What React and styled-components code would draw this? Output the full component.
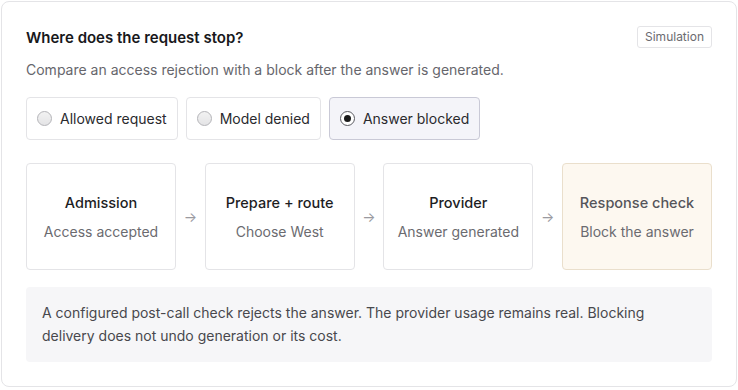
import * as React from 'react'
import styled, { createGlobalStyle } from 'styled-components'

const GlobalStyle = createGlobalStyle`
  html, body {
    margin: 0;
    padding: 0;
    background: #ffffff;
  }
  body {
    padding: 1px;
    font-family: Inter, "Liberation Sans", sans-serif;
    color: #1d1d1f;
    -webkit-font-smoothing: antialiased;
  }
  * {
    box-sizing: border-box;
  }
`

const Panel = styled.section`
  width: 736px;
  height: 386px;
  border: 1px solid #e4e4e7;
  border-radius: 8px;
  padding: 24px;
  background: #ffffff;
  display: flex;
  flex-direction: column;
`

const Header = styled.div`
  display: flex;
  justify-content: space-between;
  align-items: flex-start;
  height: 24px;
`

const Title = styled.h2`
  margin: 0;
  font-size: 15px;
  line-height: 24px;
  font-weight: 600;
  color: #18181b;
`

const Badge = styled.span`
  font-size: 12px;
  line-height: 20px;
  height: 22px;
  padding: 0 7px;
  color: #6b6b70;
  border: 1px solid #e4e4e7;
  border-radius: 3px;
`

const Lead = styled.p`
  margin: 10px 0 0 0;
  font-size: 14px;
  line-height: 20px;
  color: #66666c;
`

const Choices = styled.div`
  display: flex;
  gap: 8px;
  margin-top: 17px;
`

const Choice = styled.button`
  display: flex;
  align-items: center;
  gap: 8px;
  height: 43px;
  padding: 0 10px 0 10px;
  font-family: inherit;
  font-size: 14px;
  color: #2a2a2e;
  border-radius: 4px;
  border: 1px solid ${p => (p.$active ? '#c9c9d6' : '#e4e4e7')};
  background: ${p => (p.$active ? '#f4f4f9' : '#ffffff')};
  cursor: pointer;
`

const Dot = styled.span`
  width: 15px;
  height: 15px;
  border-radius: 50%;
  border: 1px solid ${p => (p.$on ? '#5a5a60' : '#b4b4b8')};
  background: ${p => (p.$on ? '#ffffff' : 'linear-gradient(#f2f2f2, #e4e4e6)')};
  display: flex;
  align-items: center;
  justify-content: center;
  &::after {
    content: '';
    width: 7px;
    height: 7px;
    border-radius: 50%;
    background: #1a1a1a;
    display: ${p => (p.$on ? 'block' : 'none')};
  }
`

const Flow = styled.div`
  display: grid;
  grid-template-columns: 150px 1fr 150px 1fr 150px 1fr 150px;
  align-items: center;
  margin-top: 23px;
`

const Step = styled.div`
  height: 107px;
  border-radius: 4px;
  border: 1px solid ${p => (p.$halt ? '#eadfcc' : '#e4e4e7')};
  background: ${p => (p.$halt ? '#fdf8f0' : '#ffffff')};
  display: flex;
  flex-direction: column;
  align-items: center;
  justify-content: center;
  gap: 9px;
  padding-top: 2px;
`

const StepName = styled.div`
  font-size: 14.5px;
  line-height: 20px;
  font-weight: 500;
  color: ${p => (p.$halt ? '#55555a' : '#1d1d1f')};
`

const StepNote = styled.div`
  font-size: 14px;
  line-height: 20px;
  color: #6b6b70;
`

const Arrow = styled.div`
  text-align: center;
  font-size: 14px;
  color: #9a9aa0;
`

const Note = styled.div`
  margin-top: 17px;
  padding: 14px 16px 15px 16px;
  background: #f6f6f8;
  border-radius: 4px;
  font-size: 14px;
  line-height: 23px;
  color: #48484d;
`

const options = ['Allowed request', 'Model denied', 'Answer blocked']

const steps = [
  { name: 'Admission', note: 'Access accepted' },
  { name: 'Prepare + route', note: 'Choose West' },
  { name: 'Provider', note: 'Answer generated' },
  { name: 'Response check', note: 'Block the answer', halt: true },
]

export default function App() {
  const [picked, setPicked] = React.useState(2)
  return (
    <>
      <GlobalStyle />
      <Panel>
        <Header>
          <Title>Where does the request stop?</Title>
          <Badge>Simulation</Badge>
        </Header>
        <Lead>Compare an access rejection with a block after the answer is generated.</Lead>
        <Choices>
          {options.map((o, i) => (
            <Choice key={o} $active={i === picked} onClick={() => setPicked(i)}>
              <Dot $on={i === picked} />
              {o}
            </Choice>
          ))}
        </Choices>
        <Flow>
          {steps.map((s, i) => (
            <React.Fragment key={s.name}>
              {i > 0 && <Arrow>→</Arrow>}
              <Step $halt={s.halt}>
                <StepName $halt={s.halt}>{s.name}</StepName>
                <StepNote>{s.note}</StepNote>
              </Step>
            </React.Fragment>
          ))}
        </Flow>
        <Note>
          A configured post-call check rejects the answer. The provider usage remains real. Blocking
          delivery does not undo generation or its cost.
        </Note>
      </Panel>
    </>
  )
}
